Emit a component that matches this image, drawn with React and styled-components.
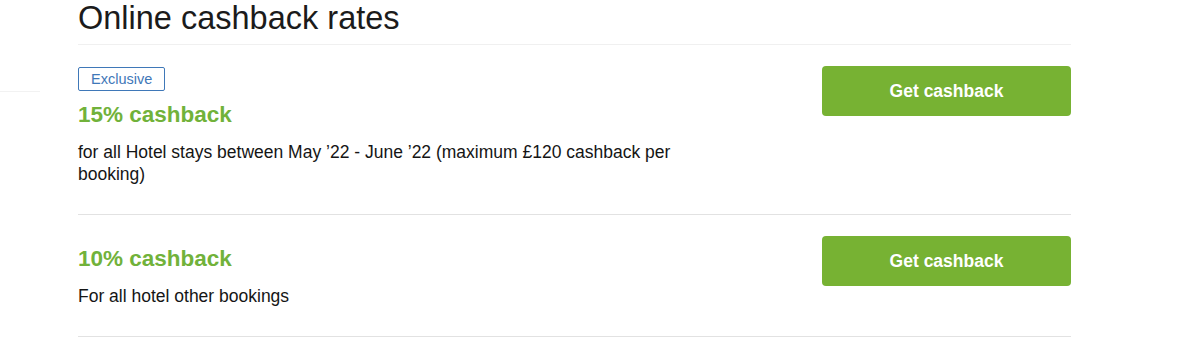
import styled, { createGlobalStyle } from 'styled-components';

const GlobalStyle = createGlobalStyle`
  html, body {
    margin: 0;
    padding: 0;
    background: #ffffff;
  }
  body {
    font-family: "Liberation Sans", Arial, sans-serif;
    color: #1a1a1a;
  }
`;

const rates = [
  {
    exclusive: true,
    rate: '15% cashback',
    text: 'for all Hotel stays between May ’22 - June ’22 (maximum £120 cashback per booking)',
  },
  {
    exclusive: false,
    rate: '10% cashback',
    text: 'For all hotel other bookings',
  },
];

export default function App() {
  return (
    <>
      <GlobalStyle />
      <Page>
        <Aside>
          <AsideRule />
        </Aside>
        <Main>
          <Title>Online cashback rates</Title>
          <List>
            {rates.map((item, i) => (
              <Row key={i}>
                <Info>
                  {item.exclusive && <Badge>Exclusive</Badge>}
                  <Rate $first={!item.exclusive}>{item.rate}</Rate>
                  <Desc>{item.text}</Desc>
                </Info>
                <Button>Get cashback</Button>
              </Row>
            ))}
          </List>
        </Main>
      </Page>
    </>
  );
}

const Page = styled.div`
  display: grid;
  grid-template-columns: 78px 993px;
  height: 341px;
  overflow: hidden;
`;

const Aside = styled.aside`
  padding-top: 91px;
`;

const AsideRule = styled.div`
  width: 40px;
  border-top: 1px solid #f2f2f2;
`;

const Main = styled.main`
  display: flex;
  flex-direction: column;
`;

const Title = styled.h1`
  margin: 0;
  font-size: 32.5px;
  line-height: 37px;
  font-weight: 400;
  color: #1b1b1b;
  padding-bottom: 7px;
  border-bottom: 1px solid #f0f0f0;
`;

const List = styled.div`
  display: flex;
  flex-direction: column;
`;

const Row = styled.div`
  display: flex;
  justify-content: space-between;
  align-items: flex-start;
  padding: 21px 0 29px;
  border-bottom: 1px solid #e2e2e2;
`;

const Info = styled.div`
  display: flex;
  flex-direction: column;
  align-items: flex-start;
  width: 640px;
`;

const Badge = styled.span`
  box-sizing: border-box;
  height: 24px;
  padding: 0 12px;
  border: 1px solid #3f78b8;
  border-radius: 2px;
  color: #3f78b8;
  font-size: 14.5px;
  line-height: 22px;
  margin-top: 1px;
`;

const Rate = styled.div`
  margin-top: ${(p) => (p.$first ? '10px' : '11px')};
  font-size: 22.5px;
  line-height: 26px;
  font-weight: 700;
  color: #71b23a;
`;

const Desc = styled.p`
  margin: 13px 0 0;
  font-size: 17.5px;
  line-height: 22px;
  color: #151515;
`;

const Button = styled.button`
  width: 249px;
  height: 50px;
  border: none;
  border-radius: 4px;
  background: #77b233;
  color: #ffffff;
  font-family: "Liberation Sans", Arial, sans-serif;
  font-size: 17.5px;
  font-weight: 700;
  cursor: pointer;
`;
